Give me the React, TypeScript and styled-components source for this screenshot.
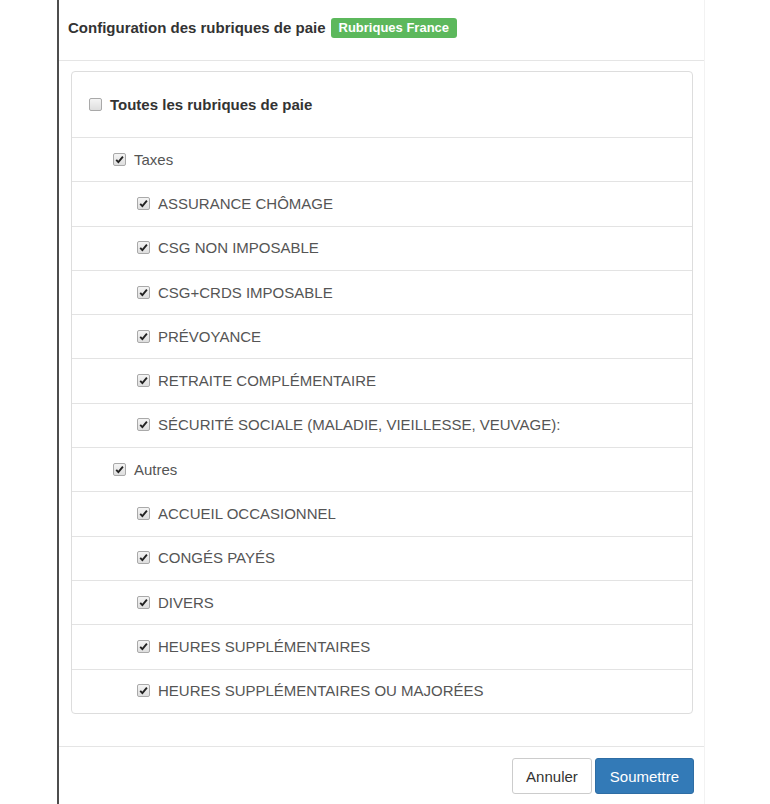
import * as React from 'react';
import styled, { createGlobalStyle } from 'styled-components';

const GlobalStyle = createGlobalStyle`
  html, body {
    margin: 0;
    padding: 0;
    background: #fff;
    font-family: 'Liberation Sans', Arial, sans-serif;
  }
`;

const Page = styled.div`
  display: flex;
  height: 804px;
  overflow: hidden;
`;

const Backdrop = styled.div`
  width: 57px;
  flex-shrink: 0;
`;

const Modal = styled.div`
  width: 645px;
  border-left: 2px solid #4d4d4d;
  border-right: 1px solid #f2f2f2;
  display: flex;
  flex-direction: column;
`;

const Header = styled.div`
  height: 61px;
  border-bottom: 1px solid #e5e5e5;
  display: flex;
  align-items: center;
  gap: 5px;
  padding: 0 0 5px 9px;
  box-sizing: border-box;
`;

const Title = styled.h4`
  margin: 0;
  font-size: 15px;
  font-weight: 600;
  color: #333;
`;

const Label = styled.span`
  display: inline-block;
  background: #5cb85c;
  color: #fff;
  font-size: 13px;
  font-weight: 700;
  line-height: 20px;
  padding: 0 8px;
  border-radius: 3px;
`;

const Body = styled.div`
  padding: 10px 11px 0 12px;
  height: 686px;
  box-sizing: border-box;
  border-bottom: 1px solid #e5e5e5;
`;

const List = styled.ul`
  margin: 0;
  padding: 0;
  list-style: none;
  border: 1px solid #ddd;
  border-radius: 4px;
`;

const Row = styled.li<{ level: number; first?: boolean }>`
  display: flex;
  align-items: center;
  height: ${({ first }) => (first ? '65px' : '44.3px')};
  box-sizing: border-box;
  padding-left: ${({ level }) => 17 + level * 24}px;
  padding-bottom: 1px;
  border-top: ${({ first }) => (first ? 'none' : '1px solid #e3e3e3')};
  font-size: 15px;
  color: ${({ first }) => (first ? '#333' : '#555')};
  font-weight: ${({ first }) => (first ? 700 : 400)};
`;

const Box = styled.span`
  width: 13px;
  height: 13px;
  box-sizing: border-box;
  border: 1px solid #a9a9a9;
  border-radius: 2px;
  background: linear-gradient(#f4f4f4, #dedede);
  display: inline-flex;
  align-items: center;
  justify-content: center;
  margin-right: 8px;
  flex-shrink: 0;
`;

const Footer = styled.div`
  display: flex;
  justify-content: flex-end;
  gap: 3px;
  padding: 11px 10px 0 0;
`;

const Button = styled.button<{ primary?: boolean }>`
  height: 36px;
  padding: 0 ${({ primary }) => (primary ? '14px' : '13px')};
  font-family: 'Liberation Sans', Arial, sans-serif;
  font-size: 15px;
  border-radius: 3px;
  border: 1px solid ${({ primary }) => (primary ? '#2e6da4' : '#ccc')};
  background: ${({ primary }) => (primary ? '#337ab7' : '#fff')};
  color: ${({ primary }) => (primary ? '#fff' : '#333')};
`;

const Check = ({ checked }: { checked: boolean }) => (
  <Box>
    {checked && (
      <svg width="9" height="9" viewBox="0 0 9 9">
        <path d="M1.2 4.8 L3.4 7.1 L7.9 1.6" fill="none" stroke="#222" strokeWidth="1.9" />
      </svg>
    )}
  </Box>
);

const ROWS: { label: string; level: number }[] = [
  { label: 'Taxes', level: 1 },
  { label: 'ASSURANCE CHÔMAGE', level: 2 },
  { label: 'CSG NON IMPOSABLE', level: 2 },
  { label: 'CSG+CRDS IMPOSABLE', level: 2 },
  { label: 'PRÉVOYANCE', level: 2 },
  { label: 'RETRAITE COMPLÉMENTAIRE', level: 2 },
  { label: 'SÉCURITÉ SOCIALE (MALADIE, VIEILLESSE, VEUVAGE):', level: 2 },
  { label: 'Autres', level: 1 },
  { label: 'ACCUEIL OCCASIONNEL', level: 2 },
  { label: 'CONGÉS PAYÉS', level: 2 },
  { label: 'DIVERS', level: 2 },
  { label: 'HEURES SUPPLÉMENTAIRES', level: 2 },
  { label: 'HEURES SUPPLÉMENTAIRES OU MAJORÉES', level: 2 }
];

const App = () => (
  <Page>
    <GlobalStyle />
    <Backdrop />
    <Modal>
      <Header>
        <Title>Configuration des rubriques de paie</Title>
        <Label>Rubriques France</Label>
      </Header>
      <Body>
        <List>
          <Row level={0} first>
            <Check checked={false} />
            Toutes les rubriques de paie
          </Row>
          {ROWS.map(row => (
            <Row key={row.label} level={row.level}>
              <Check checked />
              {row.label}
            </Row>
          ))}
        </List>
      </Body>
      <Footer>
        <Button>Annuler</Button>
        <Button primary>Soumettre</Button>
      </Footer>
    </Modal>
  </Page>
);

export default App;
